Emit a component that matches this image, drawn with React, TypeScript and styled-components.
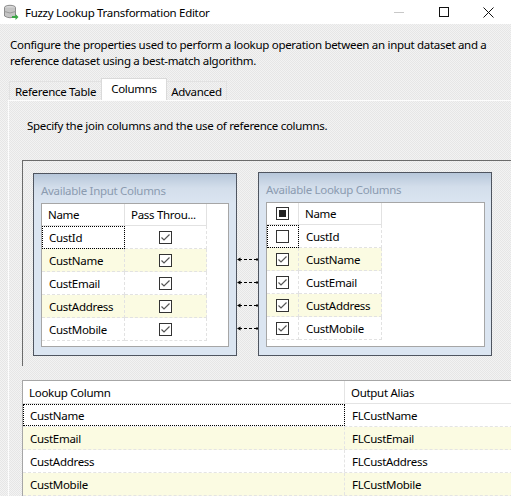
import styled, { createGlobalStyle } from 'styled-components';

const GlobalStyle = createGlobalStyle`
  html, body {
    margin: 0;
    padding: 0;
    background: #fff;
  }
`;

const dither = `repeating-conic-gradient(#f3f3f3 0 25%, #e6e6e6 0 50%) 0 0 / 2px 2px`;

const Window = styled.div`
  width: 511px;
  height: 496px;
  overflow: hidden;
  background: ${dither};
  font-family: 'Noto Sans', 'Open Sans', sans-serif;
  font-size: 11.5px;
  letter-spacing: -0.3px;
  color: #000;
`;

const TitleBar = styled.div`
  height: 24px;
  background: #fff;
  display: flex;
  align-items: center;
  padding-left: 3px;
`;

const Title = styled.span`
  margin-left: 6px;
  flex: 1;
  white-space: nowrap;
`;

const WinButton = styled.div`
  width: 45px;
  height: 24px;
  display: flex;
  align-items: center;
  justify-content: center;
`;

const Description = styled.p`
  margin: 0;
  padding: 13px 0 0 10px;
  line-height: 16px;
  white-space: nowrap;
`;

const TabStrip = styled.div`
  display: flex;
  align-items: flex-end;
  height: 22px;
  margin-top: 9px;
  padding-left: 9px;
`;

const Tab = styled.div<{ $active?: boolean; $w: number }>`
  width: ${(p) => p.$w}px;
  height: ${(p) => (p.$active ? 22 : 19)}px;
  box-sizing: border-box;
  display: flex;
  align-items: center;
  justify-content: center;
  padding-bottom: ${(p) => (p.$active ? 3 : 0)}px;
  background: ${(p) => (p.$active ? '#fff' : 'transparent')};
  border: 1px solid ${(p) => (p.$active ? '#dadada' : '#e2e2e2')};
  border-bottom: none;
  margin: 0 ${(p) => (p.$active ? -1 : 0)}px;
  position: relative;
  z-index: ${(p) => (p.$active ? 1 : 0)};
  white-space: nowrap;
`;

const Page = styled.div`
  margin-left: 8px;
  border-left: 1px solid #fdfdfd;
  border-top: 1px solid #fdfdfd;
  padding: 17px 0 0 13px;
`;

const Hint = styled.div`
  margin-left: 5px;
  line-height: 16px;
  white-space: nowrap;
`;

const Panel = styled.div`
  margin-top: 26px;
  width: 520px;
  height: 206px;
  box-sizing: border-box;
  border: 1px solid #6b6b6b;
  border-bottom: none;
  padding: 11px 0 0 10px;
  display: flex;
  align-items: flex-start;
`;

const ColumnBox = styled.div<{ $w: number; $h: number; $top: number }>`
  width: ${(p) => p.$w}px;
  height: ${(p) => p.$h}px;
  margin-top: ${(p) => p.$top}px;
  box-sizing: border-box;
  border: 1px solid #4f5560;
  background: linear-gradient(#b7c7da, #d3deeb 14px, #dbe5f1 30px, #dbe5f1);
  padding: 0 0 0 7px;
  display: flex;
  flex-direction: column;
`;

const BoxTitle = styled.div`
  height: 29px;
  line-height: 14px;
  padding-top: 10px;
  box-sizing: border-box;
  color: #8b9bb0;
  white-space: nowrap;
`;

const Grid = styled.div<{ $w: number; $h: number }>`
  width: ${(p) => p.$w}px;
  height: ${(p) => p.$h}px;
  box-sizing: border-box;
  border: 1px solid #a6a6a6;
  background: #fff;
`;

const Row = styled.div`
  display: flex;
  height: 23px;
`;

const HeadRow = styled.div`
  display: flex;
  height: 22px;
  background: #fff;
`;

const Cell = styled.div<{
  $w: number;
  $focus?: boolean;
  $center?: boolean;
  $head?: boolean;
  $yellow?: boolean;
}>`
  width: ${(p) => p.$w}px;
  flex-shrink: 0;
  box-sizing: border-box;
  display: flex;
  align-items: center;
  justify-content: ${(p) => (p.$center ? 'center' : 'flex-start')};
  padding-left: ${(p) => (p.$center ? 0 : p.$head ? 6 : 7)}px;
  background: ${(p) => (p.$yellow ? '#fbfbe2' : '#fff')};
  border-right: 1px ${(p) => (p.$head ? 'solid' : 'dashed')} #e2e2e2;
  border-bottom: 1px ${(p) => (p.$head ? 'solid' : 'dashed')} #e2e2e2;
  outline: ${(p) => (p.$focus ? '1px dotted #000' : 'none')};
  outline-offset: -1px;
  white-space: nowrap;
  overflow: hidden;
`;

const Connectors = styled.svg`
  flex-shrink: 0;
  display: block;
`;

const BottomGrid = styled.div`
  margin-top: 14px;
  width: 520px;
  border-top: 1px solid #a6a6a6;
  border-left: 1px solid #a6a6a6;
  background: #fff;
`;

const BottomRow = styled.div<{ $yellow?: boolean; $head?: boolean }>`
  display: flex;
  height: 23px;
  background: ${(p) => (p.$yellow ? '#fbfbe2' : '#fff')};
  border-bottom: 1px ${(p) => (p.$head ? 'solid' : 'dashed')} #e4e4e4;
  box-sizing: border-box;
`;

const BottomCell = styled.div<{ $w?: number; $focus?: boolean; $head?: boolean }>`
  width: ${(p) => (p.$w ? `${p.$w}px` : 'auto')};
  flex: ${(p) => (p.$w ? '0 0 auto' : '1')};
  box-sizing: border-box;
  display: flex;
  align-items: center;
  padding-left: ${(p) => (p.$head ? 6 : 7)}px;
  border-right: 1px ${(p) => (p.$head ? 'solid' : 'dashed')} #e4e4e4;
  outline: ${(p) => (p.$focus ? '1px dotted #000' : 'none')};
  outline-offset: -1px;
  white-space: nowrap;
`;

function CheckBox({ checked, mixed }: { checked?: boolean; mixed?: boolean }) {
  return (
    <svg width="13" height="13" viewBox="0 0 13 13">
      <rect x="0.5" y="0.5" width="12" height="12" fill="#fff" stroke="#333" />
      {checked && <polyline points="2.5,6.5 5,9 10.5,3.5" fill="none" stroke="#555" strokeWidth="1.2" />}
      {mixed && <rect x="3" y="3" width="7" height="7" fill="#222" />}
    </svg>
  );
}

function AppIcon() {
  return (
    <svg width="16" height="16" viewBox="0 0 16 16">
      <ellipse cx="7" cy="3.5" rx="5.5" ry="2.2" fill="#d8d8d8" stroke="#8c8c8c" />
      <path d="M1.5 3.5 V12 Q7 15.5 12.5 12 V3.5" fill="#c4c4c4" stroke="#8c8c8c" />
      <path d="M1.5 7.5 Q7 10.5 12.5 7.5" fill="none" stroke="#9a9a9a" />
      <path d="M9 12 H12.5 V10 L15.5 13 L12.5 16 V14 H9 Z" fill="#3aa845" />
    </svg>
  );
}

const columns = ['CustId', 'CustName', 'CustEmail', 'CustAddress', 'CustMobile'];
const mapped = ['CustName', 'CustEmail', 'CustAddress', 'CustMobile'];

export default function App() {
  return (
    <>
      <GlobalStyle />
      <Window>
        <TitleBar>
          <AppIcon />
          <Title>Fuzzy Lookup Transformation Editor</Title>
          <WinButton>
            <svg width="10" height="10" viewBox="0 0 10 10">
              <line x1="0" y1="5.5" x2="10" y2="5.5" stroke="#c8c8c8" />
            </svg>
          </WinButton>
          <WinButton>
            <svg width="10" height="10" viewBox="0 0 10 10">
              <rect x="0.5" y="0.5" width="9" height="9" fill="none" stroke="#111" />
            </svg>
          </WinButton>
          <WinButton>
            <svg width="11" height="11" viewBox="0 0 11 11">
              <path d="M0.5 0.5 L10.5 10.5 M10.5 0.5 L0.5 10.5" stroke="#111" />
            </svg>
          </WinButton>
        </TitleBar>

        <Description>
          Configure the properties used to perform a lookup operation between an input dataset and a
          <br />
          reference dataset using a best-match algorithm.
        </Description>

        <TabStrip>
          <Tab $w={93}>Reference Table</Tab>
          <Tab $w={66} $active>
            Columns
          </Tab>
          <Tab $w={61}>Advanced</Tab>
        </TabStrip>

        <Page>
          <Hint>Specify the join columns and the use of reference columns.</Hint>

          <Panel>
            <ColumnBox $w={204} $h={183} $top={1}>
              <BoxTitle>Available Input Columns</BoxTitle>
              <Grid $w={188} $h={144}>
                <HeadRow>
                  <Cell $w={83} $head>Name</Cell>
                  <Cell $w={82} $head>Pass Throu...</Cell>
                </HeadRow>
                {columns.map((c, i) => {
                  const yellow = i === 1 || i === 3;
                  return (
                    <Row key={c}>
                      <Cell $w={83} $focus={i === 0} $yellow={yellow}>
                        {c}
                      </Cell>
                      <Cell $w={82} $center $yellow={yellow}>
                        <CheckBox checked />
                      </Cell>
                    </Row>
                  );
                })}
              </Grid>
            </ColumnBox>

            <Connectors width="21" height="184" viewBox="0 0 21 184">
              {mapped.map((m, i) => {
                const y = 87.5 + i * 23;
                return (
                  <g key={m}>
                    <line x1="2" y1={y} x2="19" y2={y} stroke="#000" strokeDasharray="3 2" />
                    <polygon points={`0,${y} 3.5,${y - 2} 3.5,${y + 2}`} fill="#000" />
                    <rect x="19" y={y - 1} width="2" height="2" fill="#000" />
                  </g>
                );
              })}
            </Connectors>

            <ColumnBox $w={234} $h={184} $top={0}>
              <BoxTitle>Available Lookup Columns</BoxTitle>
              <Grid $w={219} $h={145}>
                <HeadRow>
                  <Cell $w={32} $center $head>
                    <CheckBox mixed />
                  </Cell>
                  <Cell $w={83} $head>Name</Cell>
                </HeadRow>
                {columns.map((c, i) => {
                  const yellow = i === 1 || i === 3;
                  return (
                    <Row key={c}>
                      <Cell $w={32} $center $focus={i === 0} $yellow={yellow}>
                        <CheckBox checked={i > 0} />
                      </Cell>
                      <Cell $w={83} $yellow={yellow}>
                        {c}
                      </Cell>
                    </Row>
                  );
                })}
              </Grid>
            </ColumnBox>
          </Panel>

          <BottomGrid>
            <BottomRow $head>
              <BottomCell $w={322} $head>Lookup Column</BottomCell>
              <BottomCell $head>Output Alias</BottomCell>
            </BottomRow>
            {mapped.map((m, i) => (
              <BottomRow key={m} $yellow={i % 2 === 1}>
                <BottomCell $w={322} $focus={i === 0}>
                  {m}
                </BottomCell>
                <BottomCell>FL{m}</BottomCell>
              </BottomRow>
            ))}
          </BottomGrid>
        </Page>
      </Window>
    </>
  );
}
